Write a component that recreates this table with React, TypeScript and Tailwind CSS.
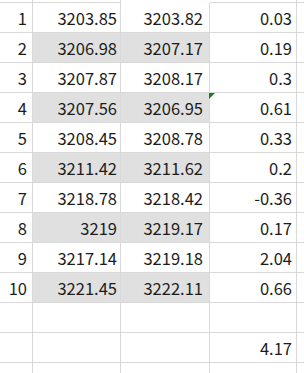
const rows: [string, string, string, string, boolean][] = [
  ["1", "3203.85", "3203.82", "0.03", false],
  ["2", "3206.98", "3207.17", "0.19", true],
  ["3", "3207.87", "3208.17", "0.3", false],
  ["4", "3207.56", "3206.95", "0.61", true],
  ["5", "3208.45", "3208.78", "0.33", false],
  ["6", "3211.42", "3211.62", "0.2", true],
  ["7", "3218.78", "3218.42", "-0.36", false],
  ["8", "3219", "3219.17", "0.17", true],
  ["9", "3217.14", "3219.18", "2.04", false],
  ["10", "3221.45", "3222.11", "0.66", true],
  ["", "", "", "", false],
  ["", "", "", "4.17", false],
  ["", "", "", "", false],
];

const cell = "flex items-center justify-end border-b border-r border-[#d9d9d9] h-[30px] pt-[2px]";

export default function App() {
  return (
    <div
      className="h-[373px] w-[304px] overflow-hidden bg-white text-[16.5px] text-[#1c1c1c]"
      style={{ fontFamily: '"Noto Sans CJK JP", "Noto Sans", sans-serif' }}
    >
      <div className="grid grid-cols-[33px_88px_89px_87px_1fr]">
        <div className="h-[3px] border-b border-r border-[#d9d9d9]" />
        <div className="h-[3px] border-b border-r border-[#d9d9d9]" />
        <div className="h-[3px] border-r border-b border-white" />
        <div className="h-[3px] border-b border-r border-[#d9d9d9]" />
        <div className="h-[3px] border-b border-[#d9d9d9]" />
        {rows.map(([n, a, b, d, gray], i) => (
          <div key={i} className="contents">
            <div className={`${cell} pr-[5px]`}>{n}</div>
            <div className={`${cell} pr-[3px] ${gray ? "bg-[#e0e0e0]" : ""}`}>{a}</div>
            <div className={`${cell} pr-[6px] ${gray ? "bg-[#e0e0e0]" : ""}`}>{b}</div>
            <div className={`${cell} relative pr-[4px]`}>
              {i === 3 && (
                <span className="absolute left-[-1px] top-0 h-0 w-0 border-r-[6px] border-t-[6px] border-r-transparent border-t-[#1d7a1d]" />
              )}
              {d}
            </div>
            <div className="h-[30px] border-b border-[#d9d9d9]" />
          </div>
        ))}
      </div>
    </div>
  );
}
